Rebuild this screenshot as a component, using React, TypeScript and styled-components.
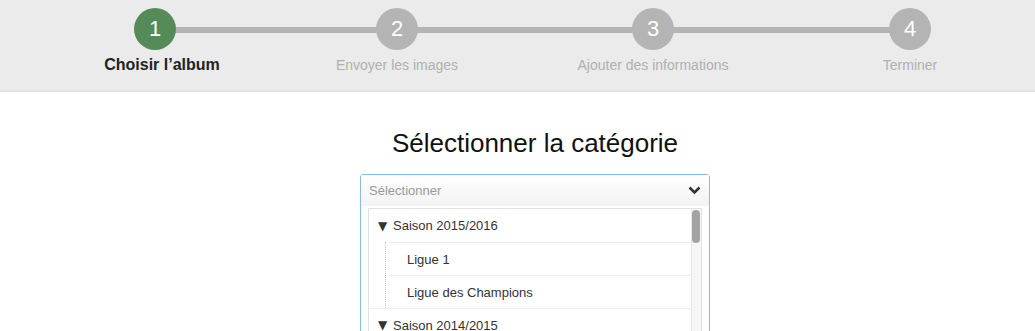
import * as React from "react";
import styled, { createGlobalStyle } from "styled-components";

const GlobalStyle = createGlobalStyle`
  html, body {
    margin: 0;
    padding: 0;
    background: #fff;
    font-family: "Liberation Sans", Arial, sans-serif;
  }
`;

const Header = styled.header`
  background: #ebebeb;
  border-bottom: 2px solid #e2e2e2;
  height: 92px;
  box-sizing: border-box;
  padding-top: 8px;
`;

const StepsRow = styled.div`
  position: relative;
  display: flex;
  padding-left: 75px;
`;

const Track = styled.div`
  position: absolute;
  left: 155px;
  top: 19px;
  width: 755px;
  height: 6px;
  background: #b4b4b4;
`;

const Step = styled.div<{ $gap: number }>`
  position: relative;
  width: 160px;
  margin-left: ${(p) => p.$gap}px;
  display: flex;
  flex-direction: column;
  align-items: center;
`;

const Circle = styled.div<{ $active?: boolean }>`
  width: 42px;
  height: 42px;
  border-radius: 50%;
  background: ${(p) => (p.$active ? "#558a59" : "#b4b4b4")};
  color: #fff;
  font-size: 22px;
  line-height: 42px;
  text-align: center;
`;

const StepLabel = styled.div<{ $active?: boolean }>`
  margin-top: ${(p) => (p.$active ? "6px" : "7px")};
  margin-left: ${(p) => (p.$active ? "14px" : "0")};
  font-size: ${(p) => (p.$active ? "16px" : "14px")};
  font-weight: ${(p) => (p.$active ? 700 : 400)};
  color: ${(p) => (p.$active ? "#222" : "#b0b0b0")};
  white-space: nowrap;
`;

const Main = styled.main`
  padding-left: 35px;
  display: flex;
  flex-direction: column;
  align-items: center;
`;

const Title = styled.h1`
  margin: 35px 0 0;
  font-size: 26px;
  font-weight: 400;
  color: #111;
  line-height: 32px;
`;

const SelectBox = styled.div`
  margin-top: 15px;
  width: 350px;
  box-sizing: border-box;
  border: 1px solid #86bbe2;
  border-radius: 3px;
  background: #fff;
`;

const SelectHead = styled.div`
  height: 31px;
  display: flex;
  align-items: center;
  justify-content: space-between;
  padding: 0 8px 0 8px;
  background: linear-gradient(#ffffff, #f3f3f3);
  font-size: 13px;
  color: #999;
`;

const Dropdown = styled.div`
  margin: 2px 7px 0;
  border: 1px solid #e2e2e2;
  display: flex;
  height: 160px;
`;

const List = styled.div`
  flex: 1;
`;

const Row = styled.div<{ $child?: boolean; $first?: boolean }>`
  height: 33px;
  box-sizing: border-box;
  display: flex;
  align-items: center;
  font-size: 13px;
  color: #333;
  border-top: ${(p) => (p.$first ? "none" : "1px solid #ececec")};
  padding-left: ${(p) => (p.$child ? "18px" : "9px")};
  margin-left: ${(p) => (p.$child ? "3px" : "0")};
`;

const Arrow = styled.span`
  font-family: "DejaVu Sans", sans-serif;
  font-size: 12px;
  width: 15px;
  color: #333;
`;

const Group = styled.div`
  margin-left: 16px;
  border-left: 1px dotted #c4c4c4;
`;

const ScrollTrack = styled.div`
  width: 9px;
  border-left: 1px solid #e6e6e6;
  background: #f6f6f6;
  padding: 1px 0 0 0;
`;

const Thumb = styled.div`
  width: 8px;
  height: 33px;
  border-radius: 4px;
  background: #a3a3a3;
`;

const steps = [
  { n: 1, label: "Choisir l’album", gap: 0, active: true },
  { n: 2, label: "Envoyer les images", gap: 82 },
  { n: 3, label: "Ajouter des informations", gap: 96 },
  { n: 4, label: "Terminer", gap: 97 },
];

const Chevron = () => (
  <svg width="13" height="9" viewBox="0 0 13 9">
    <polyline points="1.5,1.5 6.5,6.5 11.5,1.5" fill="none" stroke="#333" strokeWidth="2.6" />
  </svg>
);

const App = () => (
  <>
    <GlobalStyle />
    <Header>
      <StepsRow>
        <Track />
        {steps.map((s) => (
          <Step key={s.n} $gap={s.gap}>
            <Circle $active={s.active}>{s.n}</Circle>
            <StepLabel $active={s.active}>{s.label}</StepLabel>
          </Step>
        ))}
      </StepsRow>
    </Header>
    <Main>
      <Title>Sélectionner la catégorie</Title>
      <SelectBox>
        <SelectHead>
          <span>Sélectionner</span>
          <Chevron />
        </SelectHead>
        <Dropdown>
          <List>
            <Row $first>
              <Arrow>▼</Arrow>Saison 2015/2016
            </Row>
            <Group>
              <Row $child>Ligue 1</Row>
              <Row $child>Ligue des Champions</Row>
            </Group>
            <Row>
              <Arrow>▼</Arrow>Saison 2014/2015
            </Row>
          </List>
          <ScrollTrack>
            <Thumb />
          </ScrollTrack>
        </Dropdown>
      </SelectBox>
    </Main>
  </>
);

export default App;
